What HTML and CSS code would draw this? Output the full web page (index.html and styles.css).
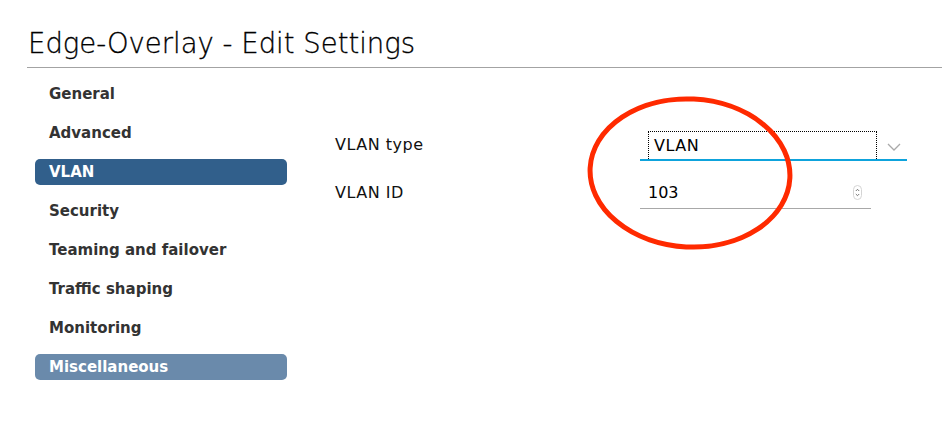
FILE: index.html
```html
<!DOCTYPE html>
<html>
<head>
<meta charset="utf-8">
<link rel="stylesheet" href="styles.css">
</head>
<body>
<div class="dialog">
  <header class="header">
    <h1 class="title">Edge-Overlay - Edit Settings</h1>
  </header>
  <div class="body">
    <nav class="nav">
      <div class="nav-item">General</div>
      <div class="nav-item">Advanced</div>
      <div class="nav-item active">VLAN</div>
      <div class="nav-item">Security</div>
      <div class="nav-item">Teaming and failover</div>
      <div class="nav-item">Traffic shaping</div>
      <div class="nav-item">Monitoring</div>
      <div class="nav-item hover">Miscellaneous</div>
    </nav>
    <section class="content">
      <div class="form">
        <div class="row">
          <div class="label">VLAN type</div>
          <div class="select">
            <div class="select-value">VLAN</div>
            <svg class="chevron" width="14" height="8" viewBox="0 0 14 8"><path d="M1 1 L7 7 L13 1" fill="none" stroke="#a9a9a9" stroke-width="1.3"/></svg>
          </div>
        </div>
        <div class="row">
          <div class="label">VLAN ID</div>
          <div class="input">
            <span class="input-value">103</span>
            <span class="spinner">
              <svg width="9" height="15" viewBox="0 0 9 15"><rect x="0.5" y="0.5" width="8" height="14" rx="4" fill="#fff" stroke="#d4d4d4"/><path d="M2.8 6 L4.5 4.3 L6.2 6" fill="none" stroke="#666" stroke-width="0.9"/><path d="M2.8 9 L4.5 10.7 L6.2 9" fill="none" stroke="#666" stroke-width="0.9"/></svg>
            </span>
          </div>
        </div>
      </div>
      <svg class="circle" width="212" height="160" viewBox="0 0 212 160"><ellipse cx="106" cy="80" rx="100" ry="74" fill="none" stroke="#ff2a00" stroke-width="5"/></svg>
    </section>
  </div>
</div>
</body>
</html>
```

FILE: styles.css
```css
* { box-sizing: border-box; }
html, body { margin: 0; padding: 0; background: #fff; }
body {
  width: 942px;
  height: 421px;
  overflow: hidden;
  font-family: "DejaVu Sans", "Liberation Sans", sans-serif;
  color: #000;
}
.header {
  margin-left: 27px;
  border-bottom: 1px solid #a3a3a3;
  height: 68px;
  padding-top: 25px;
}
.title {
  margin: 0 0 0 1px;
  font-weight: 200;
  font-size: 27.5px;
  line-height: 36px;
  color: #000;
  -webkit-text-stroke: 0.3px #000;
}
.body {
  display: flex;
  padding-top: 13px;
}
.nav {
  margin-left: 35px;
  width: 252px;
  display: flex;
  flex-direction: column;
  gap: 13px;
}
.nav-item {
  height: 26px;
  line-height: 26px;
  padding-left: 14px;
  font-size: 15px;
  font-weight: 700;
  color: #333;
  border-radius: 5px;
}
.nav-item.active { background: #315f8b; color: #fff; }
.nav-item.hover { background: #6a8aab; color: #fff; }
.content {
  position: relative;
  margin-left: 48px;
  flex: 1;
}
.form {
  padding-top: 50px;
  display: flex;
  flex-direction: column;
  gap: 18px;
}
.row {
  display: flex;
  align-items: flex-end;
}
.label {
  width: 305px;
  font-size: 16px;
  line-height: 20px;
  padding-bottom: 6px;
  color: #111;
  letter-spacing: 0.5px;
}
.select {
  width: 267px;
  height: 30px;
  border-bottom: 2px solid #0ea3dc;
  display: flex;
  align-items: stretch;
}
.select-value {
  margin-left: 8px;
  width: 229px;
  border: 1px dotted #000;
  border-bottom-width: 0;
  padding-left: 5px;
  font-size: 16px;
  line-height: 26px;
  padding-top: 1px;
  letter-spacing: 0.5px;
}
.chevron {
  margin-left: 10px;
  margin-top: 12px;
}
.input {
  width: 231px;
  height: 30px;
  border-bottom: 1px solid #a8a8a8;
  display: flex;
  align-items: center;
  justify-content: space-between;
  padding: 0 9px 2px 8px;
}
.input-value {
  font-size: 16px;
  line-height: 20px;
}
.spinner { display: flex; }
.circle {
  position: absolute;
  left: 249px;
  top: 12px;
  transform: rotate(3deg);
}
```
